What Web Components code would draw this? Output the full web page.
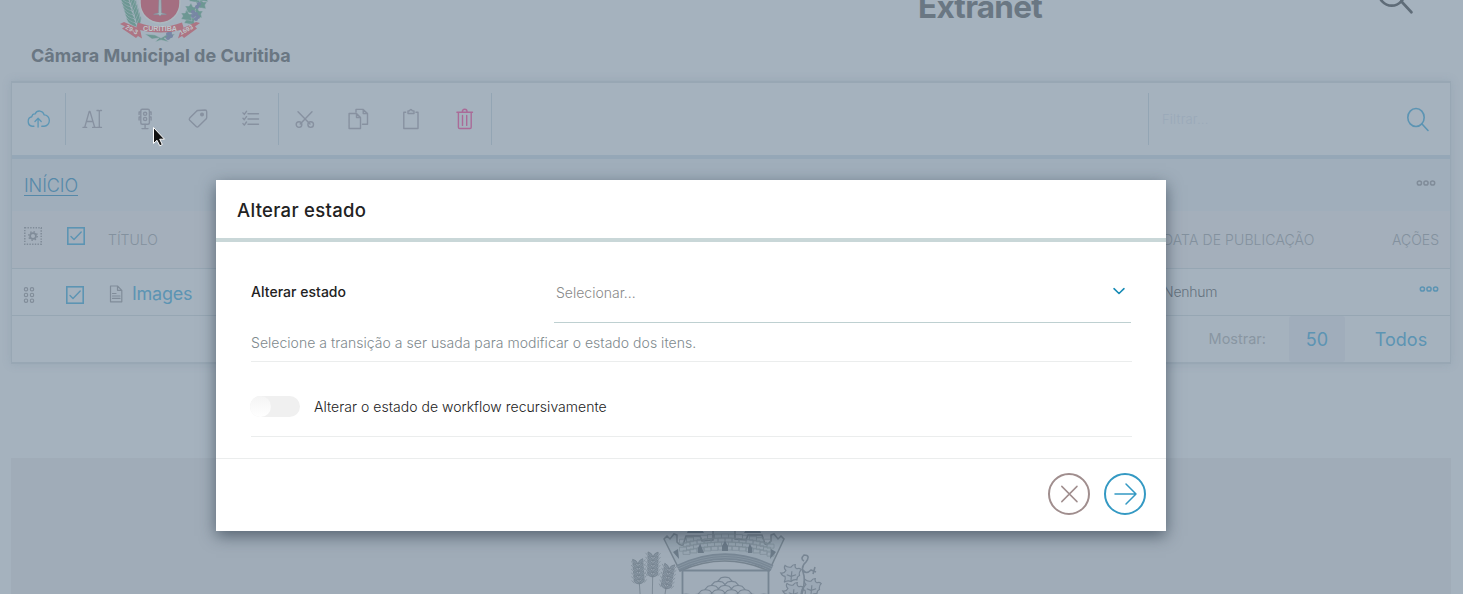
<!DOCTYPE html>
<html lang="pt-BR">
<head>
<meta charset="utf-8">
<title>Extranet</title>
<style>
html,body{margin:0;height:594px;overflow:hidden;background:#a5b2be;font-family:Inter,"Liberation Sans",sans-serif;color:#6a7783}
</style>
</head>
<body>
<x-page></x-page>
<x-modal heading="Alterar estado"></x-modal>
<x-cursor></x-cursor>
<script>
const S='fill="none" stroke="currentColor" stroke-linejoin="round" stroke-linecap="round"';
const ICONS={
cloud:`<g ${S} stroke-width="1.4" transform="translate(1.2 0) scale(.92 1)"><path d="M9.5 21.2H7.6A4.8 4.8 0 0 1 7.2 11.7 A3.4 3.4 0 0 1 10.8 8.9 A5.3 5.3 0 0 1 20.6 9.9 A5.6 5.6 0 0 1 20.6 21.2H18"/><path d="M14 22V13.4M10.6 16.6L14 13.2L17.4 16.6"/></g>`,
rename:`<g ${S} stroke-width="1.3"><path d="M6.8 22L11.2 6.500H12L16.600 22M8.400 16.500H15M5 22.400H8.700M14.600 22.400H18M19 5.500H20.500Q21.300 5.500 21.300 6.500V21.400Q21.300 22.400 20.400 22.400H19M23.500 5.500H22.200Q21.300 5.500 21.300 6.500M21.300 21.400Q21.300 22.400 22.200 22.400H23.500"/></g>`,
state:`<g ${S} stroke-width="1.4"><rect x="9.8" y="4.2" width="8.6" height="15" rx="1.5"/><circle cx="14.1" cy="8.8" r="1.6"/><circle cx="14.1" cy="14" r="1.6"/><path d="M14.1 19.5V23.4M11 23.6H17M9.5 7H8.1V9.5M9.5 12H8.1V15M18.7 7H20.1V9.5M18.7 12H20.1V15"/></g>`,
tag:`<g ${S} stroke-width="1.4"><path d="M13.7 5.5L21 5Q22.7 5 22.7 6.7V12.6Q22.7 13.5 22 14.1L14.4 21.6Q13.3 22.7 12.2 21.6L5.7 15.3Q4.8 14.2 5.7 13.1L12.5 6.2Q13 5.6 13.7 5.5Z"/><circle cx="18" cy="9.5" r="1.3" fill="currentColor"/></g>`,
list:`<g ${S} stroke-width="1.4"><path d="M11 8.7H21.5M11 14H21.5M11 19.3H21.5M6 7.9L7.3 9.4L9.5 6.3M6 13.2L7.3 14.7L9.5 11.6M6 18.6L7.3 20.1L9.5 17"/></g>`,
cut:`<g ${S} stroke-width="1.4"><path d="M7 6.7L19 19M21 6.7L9.2 19"/><circle cx="8" cy="19.6" r="2.8"/><circle cx="19.7" cy="19.6" r="2.8"/></g>`,
copy:`<g ${S} stroke-width="1.4" stroke-linejoin="miter" transform="translate(.5 0)"><path d="M4.6 8.5H12L16 12.5V23.5H4.6ZM12 8.5V12.5H16M11.5 7V4.4H18.7L23 8.5V19.3H18M18.7 4.4V8.5H23"/></g>`,
paste:`<g ${S} stroke-width="1.4" stroke-linejoin="miter"><path d="M8.7 7.2H6.8V23.5H21V7.2H19M11 8.5V5.9H12.5Q13.9 3.2 15.3 5.9H17V8.5Z"/></g>`,
trash:`<g ${S} stroke-width="1.4" transform="translate(.9 0)"><path d="M6 7.2H21.6M7.5 7.5V22.2Q7.5 23.5 8.8 23.5H19Q20.3 23.5 20.3 22.2V7.5M11.6 10.5V20.4M15.8 10.5V20.4M11.4 7Q11.4 4.3 13.8 4.3Q16.2 4.3 16.2 7"/></g>`,
search:`<g ${S} stroke-width="1.6"><ellipse cx="12" cy="11.5" rx="8.2" ry="9"/><path d="M17.8 17.8L24 24.5"/></g>`,
dots:`<g fill="none" stroke="currentColor" stroke-width="1.5"><circle cx="7.4" cy="14" r="2.1"/><circle cx="14" cy="14" r="2.1"/><circle cx="20.6" cy="14" r="2.1"/></g>`,
grip:`<g fill="none" stroke="currentColor" stroke-width="1.1"><circle cx="11" cy="8.3" r="1.7"/><circle cx="17" cy="8.3" r="1.7"/><circle cx="11" cy="14" r="1.7"/><circle cx="17" cy="14" r="1.7"/><circle cx="11" cy="19.7" r="1.7"/><circle cx="17" cy="19.7" r="1.7"/></g>`,
gear:`<rect x="5.8" y="5.8" width="16.4" height="16.4" fill="none" stroke="currentColor" stroke-width="1.5" stroke-dasharray="1.4 1.3"/><circle cx="14" cy="14" r="2.9" fill="none" stroke="currentColor" stroke-width="1.7"/><circle cx="14" cy="14" r="4.3" fill="none" stroke="currentColor" stroke-width="1.4" stroke-dasharray="1.4 1.98"/>`,
check:`<rect x="5.8" y="5.8" width="16.4" height="16.4" fill="none" stroke="currentColor" stroke-width="1.6"/><path ${S} stroke-width="1.4" d="M9 14.5L12 17.5L19.2 10"/>`,
file:`<g ${S} stroke-width="1.2" stroke-linejoin="miter"><path d="M8.5 6H15.5L19.8 10.3V21.8H8.5ZM15.5 6V10.3H19.8M10.5 13.5H14M10.5 16H18M10.5 18.4H18"/></g>`,
close:`<g ${S} stroke-width="1.5"><path d="M6.8 6.4L22 21.6M22 6.4L6.8 21.6"/></g>`,
arrow:`<g ${S} stroke-width="1.5"><path d="M4 14H25M15 4L25 14L15 24"/></g>`,
chevron:`<path ${S} stroke-width="1.6" d="M9 11.7L14 16.5L19 11.7"/>`
};
const define=(tag,html)=>customElements.define(tag,class extends HTMLElement{
  connectedCallback(){
    if(this.shadowRoot)return;
    const t=document.createElement('template');
    t.innerHTML=typeof html==='function'?html(this):html;
    this.attachShadow({mode:'open'}).append(t.content.cloneNode(true));
  }});

define('x-icon',el=>`<style>:host{display:block;width:28px;height:28px;flex:none}svg{display:block;width:100%;height:100%;overflow:visible}</style><svg viewBox="0 0 28 28">${ICONS[el.getAttribute('name')]}</svg>`);

define('x-tool',`<style>:host{display:flex;width:53px;height:52px;flex:none;align-items:center;justify-content:center;color:#8791a0;box-sizing:border-box;padding-right:1px}:host([end]){width:54px;padding-right:2px;border-right:1px solid #93a5b4}:host([tone=blue]){color:#5c96b5}:host([tone=pink]){color:#aa6b98}</style><slot></slot>`);

define('x-toolbar',`<style>
:host{display:flex;height:72px;align-items:center;border-bottom:4px solid #95a7b7}
.filter{margin-left:auto;display:flex;align-items:center;justify-content:space-between;width:302px;height:52px;border-left:1px solid #93a5b4;box-sizing:border-box;padding:0 19px 0 13px}
span{font-size:13px;font-weight:300;color:#9aa9b9;letter-spacing:.2px}
.filter x-icon{color:#5c94b3;margin-top:2px}
</style>
<x-tool tone="blue" end><x-icon name="cloud"></x-icon></x-tool>
<x-tool><x-icon name="rename"></x-icon></x-tool><x-tool><x-icon name="state"></x-icon></x-tool><x-tool><x-icon name="tag"></x-icon></x-tool><x-tool end><x-icon name="list"></x-icon></x-tool>
<x-tool><x-icon name="cut"></x-icon></x-tool><x-tool><x-icon name="copy"></x-icon></x-tool><x-tool><x-icon name="paste"></x-icon></x-tool><x-tool tone="pink" end><x-icon name="trash"></x-icon></x-tool>
<div class="filter"><span>Filtrar...</span><x-icon name="search" style="margin-right:-1px"></x-icon></div>`);

define('x-crest',()=>{
  let l='';
  for(let i=0;i<9;i++){const x=10-i*1.2,y=27-i*4;l+=`<path d="M${x+8} ${y}q-9 -1 -12 -9q8 1 11 8q-1 -8 4 -10q1 6 -3 11"/>`}
  let r='';
  [[69,24],[76,17],[70,13],[80,8],[74,2],[66,20],[82,1]].forEach(([x,y])=>r+=`<path d="M${x} ${y}l-5 -1l2 -3l-2 -3l4 0l2 -3l2 4l4 0l-2 3l1 4l-4 -1z"/>`);
  let g='';
  [[73,12],[76,14],[73,16],[78,17],[76,19],[48,34],[51,36],[50,33],[79,4],[77,7],[48,38]].forEach(([x,y])=>g+=`<circle cx="${x}" cy="${y}" r="2"/>`);
  return `<style>:host{display:block;width:86px;height:43px}svg{display:block;overflow:visible;font-family:"Liberation Sans",sans-serif;font-weight:700}</style>
<svg width="86" height="43" viewBox="0 0 86 43"><g fill="#6d9793" stroke="#a5b2be" stroke-width=".5">${l}${r}<path d="M25 34l10 1 6 3 5-3 9-1-5 5-6-1 5 4-8-2-6 2 4-4-7 1z"/></g><g fill="#7886a5">${g}</g>
<path d="M20 -4V3a20 20 0 0 0 40 0V-4Z" fill="#a46f81" stroke="#acb8bf" stroke-width="1.5"/>
<path d="M39 -2h2l.4 15 5 1.300-5 .3-1.400 1.400-1.400-1.400-5-.3 5-1.300z" fill="#a3b2b9" stroke="#8294a0" stroke-width=".6"/>
<g fill="#ad7584"><path d="M4 22L20 29L22 38.500L18 36L16 38L2 28.500L5 26.500L0 24Z"/><path d="M76 22L61 29L58 38.500L62 36L64 38L77 28.500L75 26.500L80 23Z"/><path d="M18 22.500Q40 31 62 22.500L64 29Q41 36 16 29Z"/></g>
<g fill="#bdc5ca" font-size="6.5"><text x="23" y="30.500" textLength="34" lengthAdjust="spacingAndGlyphs">CURITIBA</text><text transform="translate(5 28.600) rotate(28)">29-3</text><text transform="translate(61 35.300) rotate(-30)">1693</text></g></svg>`});

define('x-arms',()=>{
  const wheat=(x,y,a)=>{let s=`<g transform="translate(${x} ${y}) rotate(${a})"><path d="M0 0V55"/>`;for(let i=0;i<6;i++)s+=`<path fill="#84929f" d="M0 ${i*4}q-6 -1 -5 -5q4 1 5 5q6 -1 5 -5q-4 1 -5 5"/><path stroke-width=".6" d="M-5 ${i*4-1}l-2.500 -3M5 ${i*4-1}l2.500 -3"/>`;return s+'</g>'};
  let stones='';
  for(let r=0;r<5;r++)for(let i=-5;i<=5;i++){const x=94+i*13+(r%2?6.500:0),y=51+r*4.200;if(Math.abs(x-94)<8+r*8)stones+=`<path fill="#a0acb8" d="M${x-7} ${y}l3-3.200q4-1.300 8 0l3 3.200l-3 3.200h-8z"/>`}
  let bricks='';
  for(let r=0;r<4;r++)for(let i=-6;i<=6;i++){const x=94+i*7+(r%2?3.500:0),y=4+r*4+Math.pow(Math.abs(x-94)/45,2)*6;bricks+=`<path d="M${x-3.5} ${y}h7v4h-7z"/>`}
  const leaf=(x,y,k)=>`<path transform="translate(${x} ${y}) scale(${k})" fill="#9ba8b5" stroke-width="1.4" d="M0 10Q-4 8 -8 11Q-6 7 -7 4Q-10 4 -12 0Q-8 1 -6 -3Q-9 -6 -7 -9Q-4 -6 0 -7Q2 -10 5 -10Q4 -6 7 -5Q10 -6 12 -4Q9 -1 10 3Q7 4 7 8Q3 7 0 10ZM0 9L1-2M0 4l-5-2M0 4l6-2"/>`;
  return `<style>:host{display:block;width:192px;height:64px}svg{display:block;overflow:hidden}</style><svg width="192" height="64" viewBox="0 0 192 64"><g fill="none" stroke="#75838f" stroke-width=".8">
${wheat(7,34,-4)}${wheat(22,27,1)}${wheat(38,39,9)}
<path fill="#98a6b2" stroke-width="1.5" d="M33 9l3-3 3 3 4-5 3 1v7q3 4 6 3l3-9h14l2 5 11-1V-3h22v12l11 1 2-5h14l3 9q3 1 6-3V5l3-1 4 5 3-3 3 3-15 32Q94 21 49 41z"/>
<g stroke="#81909c">${bricks}</g></g><path fill="none" stroke="#788795" stroke-width="6.500" d="M47 38Q94 15 141 38"/><g fill="none" stroke="#8f9daa" stroke-width=".6"><path d="M46 37Q94 14 142 37M47 39Q94 16 141 39"/></g>
<g fill="#6b7a88"><path d="M91 21v-5l3-5 3 5v5zM67 23v-5l2-4 2 4 2 5zM117 23v-5l2-4 2 4v5zM42 22l5-3 1 10zM145 22l-5-3-1 10zM56 3l2-5h12l3 5zM113 3l3-5h12l2 5z"/></g>
<g fill="none" stroke="#788694" stroke-width="1.100">${stones}<path stroke-width="1.800" stroke="#768593" d="M51.500 64V40.500H137.500V64"/>
${leaf(160,43,.85)}${leaf(180,57,.85)}${leaf(162,61,.85)}<path stroke-width="1.6" d="M171 64q4-14 1-22q-2-6 3-10q5-7-2-7q-4 4 0 6M172 40q3 5 8 0l5 2M184 37l-2 7"/></g></svg>`});

define('x-header',`<style>
:host{display:flex;height:81px}
.brand{width:260px;margin-left:31px;display:flex;flex-direction:column;align-items:flex-start}
x-crest{margin-left:89px}
b{font-size:18px;line-height:24px;white-space:nowrap;margin-top:1px}
h1{margin:-13px 0 0 627px;width:240px;font-size:31.500px;line-height:39px;font-weight:700;letter-spacing:-.75px}
x-icon{width:46px;height:46px;margin:-28px 0 0 214px;color:#5f6c78}
</style><div class="brand"><x-crest></x-crest><b>Câmara Municipal de Curitiba</b></div><h1>Extranet</h1><x-icon name="search"></x-icon>`);

define('x-listing',`<style>
:host{display:block;margin:0 12px 0 11px;height:283px;box-sizing:border-box;border:1px solid #98a7b4;border-width:2px 1px 2px 1px;box-shadow:0 0 8px rgba(110,135,155,.25)}
.row{display:flex;align-items:center;box-sizing:border-box}
.path{height:52px;background:#a0aebb;padding:0 10px 0 12px;justify-content:space-between}
.path a{font-size:18px;font-weight:300;line-height:19px;color:#5689a9;border-bottom:1px solid #5689a9;margin-top:2px;letter-spacing:-.1px}
.cols{display:grid;grid-template-columns:42px 47px 1fr 230px 46px;height:58px;background:#a4afbb;border-bottom:1px solid #96a6b3;padding:0 11px 0 7px;color:#83919e;font-size:14px;font-weight:300}
.item{display:grid;grid-template-columns:42px 42px 33px 1fr 230px 46px;height:47px;border-bottom:1px solid #96a6b3;padding:0 11px 0 7px;box-sizing:border-box}
.foot{height:46px;justify-content:flex-end;color:#8996a2}
.foot span{font-size:14.500px;margin-right:23px;margin-top:-1px}
.n{font-size:18px;color:#5c94b3}
.fifty{width:56px;height:46px;line-height:47px;background:#a0adbb;text-align:center;border-radius:3px;box-sizing:border-box}
.all{width:105px;padding-left:7px;text-align:center;box-sizing:border-box}
.g{color:#808c99}.b{color:#5c94b3}
</style>
<x-toolbar></x-toolbar>
<div class="row path"><a>INÍCIO</a><x-icon class="g" name="dots" style="margin-top:-4px"></x-icon></div>
<div class="row cols"><x-icon class="g" name="gear" style="margin-top:-8px"></x-icon><x-icon class="b" name="check" style="margin:-8px 0 0 1px"></x-icon><span>TÍTULO</span><span style="letter-spacing:.1px">DATA DE PUBLICAÇÃO</span><span style="white-space:nowrap;justify-self:end">AÇÕES</span></div>
<div class="row item"><x-icon class="g" name="grip" style="margin:5px 0 0 -4px"></x-icon><x-icon class="b" name="check" style="margin-top:5px"></x-icon><x-icon class="g" name="file" style="margin-top:4px;margin-left:-1px"></x-icon><span class="n" style="margin-left:-4px;margin-top:3px;letter-spacing:-.25px">Images</span><span style="font-size:14px;font-weight:300;color:#667380;margin-top:-2px;letter-spacing:-.25px">Nenhum</span><x-icon class="b" name="dots" style="margin:-6px 0 0 22px"></x-icon></div>
<div class="row foot"><span>Mostrar:</span><div class="n fifty">50</div><div class="n all">Todos</div></div>`);

define('x-page',`<style>:host{display:block;height:594px;overflow:hidden}
.banner{margin:94px 12px 0 11px;height:136px;background:#a0acb8;display:flex;box-sizing:border-box;padding:72px 0 0 620px}</style>
<x-header></x-header><x-listing></x-listing><div class="banner"><x-arms></x-arms></div>`);

define('x-round',`<style>:host{display:flex;width:42px;height:42px;box-sizing:border-box;border:2px solid;border-radius:50%;align-items:center;justify-content:center}</style><slot></slot>`);

define('x-modal',el=>`<style>
:host{position:absolute;left:216px;top:180px;width:950px;height:351px;background:#fff;box-shadow:0 5px 15px rgba(35,50,65,.6);color:#222;display:flex;flex-direction:column}
header{height:62px;box-sizing:border-box;border-bottom:4px solid #c9d7d8;padding:1px 0 0 21px;display:flex;align-items:center;font-size:18.500px;font-weight:500;letter-spacing:.3px}
main{height:216px;padding:0 34px 0 35px}
.f{height:81px;display:grid;grid-template-columns:303px 577px;box-sizing:border-box}
label{font-size:14px;font-weight:500;padding-top:41px;letter-spacing:.03px}
.sel{display:flex;justify-content:space-between;align-items:center;border-bottom:1px solid #bed0d1;padding:20px 0 0 2px;font-size:14px;font-weight:300;color:#898989}
.help{height:39px;box-sizing:border-box;border-bottom:1px solid #ebeded;font-size:14px;font-weight:300;color:#7e898d;line-height:40px;letter-spacing:.03px}
.tg{height:75px;box-sizing:border-box;border-bottom:1px solid #ebeded;display:flex;align-items:center;padding-top:15px;font-size:14px;font-weight:300;letter-spacing:.025px}
.sw{width:50px;height:21px;border-radius:11px;background:#f0f0f0;margin:0 14px 0 -1px}
.sw i{display:block;width:21px;height:21px;border-radius:50%;background:linear-gradient(#f4f4f4,#fff)}
footer{flex:1;border-top:1px solid #ebeded;display:flex;justify-content:flex-end;align-items:center;gap:14px;padding-right:20px;padding-bottom:2px}
</style>
<header>${el.getAttribute('heading')}</header>
<main><div class="f"><label>Alterar estado</label><div class="sel"><span>Selecionar...</span><x-icon name="chevron" style="color:#178bb5;margin:-3px -2px 0 0"></x-icon></div></div>
<div class="help">Selecione a transição a ser usada para modificar o estado dos itens.</div>
<div class="tg"><div class="sw"><i></i></div><span>Alterar o estado de workflow recursivamente</span></div></main>
<footer><x-round style="color:#a08e8e"><x-icon name="close"></x-icon></x-round><x-round style="color:#3499c3"><x-icon name="arrow"></x-icon></x-round></footer>`);

define('x-cursor',`<style>:host{position:absolute;left:152px;top:126px}svg{display:block}</style><svg width="16" height="22" viewBox="0 0 16 22"><path d="M1.500 1.500V17.500L5 14.300L7.800 19.800L10.300 18.500L7.700 13.200H12.500Z" fill="#111" stroke="#fff" stroke-width="1"/></svg>`);
</script>
</body>
</html>
